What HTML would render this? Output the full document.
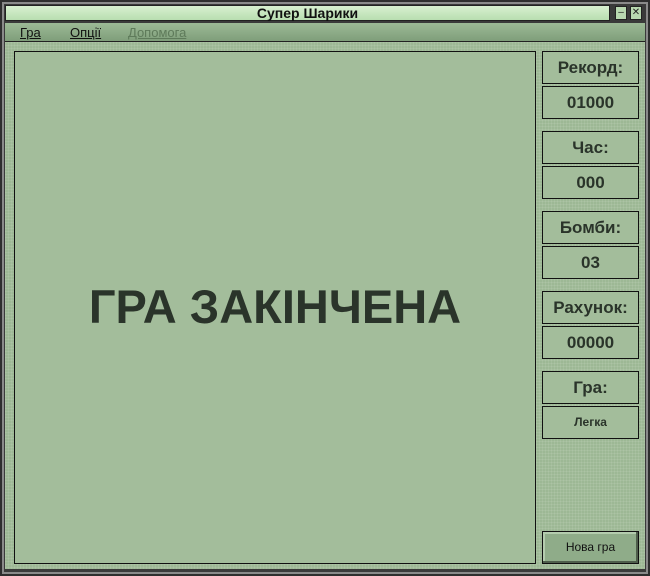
<!DOCTYPE html>
<html><head><meta charset="utf-8"><style>
*{margin:0;padding:0;box-sizing:border-box}
body{width:650px;height:576px;background:#2e2e2e;font-family:"Liberation Sans",sans-serif;position:relative;overflow:hidden}
.frame{position:absolute;left:2px;top:2px;width:646px;height:572px;border:2px solid #8a8a8a;background:#3a3a3a}
.title{position:absolute;left:5px;top:5px;width:605px;height:16px;background:linear-gradient(#d8f0d0,#b8deb0);border:1px solid #222;text-align:center;font-weight:bold;font-size:14px;line-height:14px;color:#111}
.tb{position:absolute;top:6px;width:12px;height:14px;border:1px solid #222;background:#b8d8b0;font-size:10px;line-height:12px;text-align:center;color:#222}
.menu{position:absolute;left:5px;top:23px;width:640px;height:19px;background:linear-gradient(#9cba96,#7f9e7a);border-bottom:1px solid #222}
.menu span{position:absolute;top:2px;font-size:13px;color:#111;text-decoration:underline}
.body{position:absolute;left:5px;top:42px;width:640px;height:527px;background:#9db895;background-image:linear-gradient(90deg,rgba(255,255,255,.08) 1px,transparent 1px),linear-gradient(rgba(255,255,255,.08) 1px,transparent 1px);background-size:3px 3px}
.game{position:absolute;left:14px;top:51px;width:522px;height:513px;border:1px solid #111;background:#a3bd9b;text-align:center;font-weight:bold;font-size:47px;color:#2a342a;line-height:510px}
.box{position:absolute;left:542px;width:97px;height:33px;border:1px solid #111;background:#a3bd9b;text-align:center;font-weight:bold;font-size:17px;line-height:31px;color:#2a342a}
.btn{position:absolute;left:542px;top:531px;width:97px;height:33px;border:1px solid #111;box-shadow:inset -2px -2px 0 #4e5e4b,inset 2px 2px 0 #b4ccae;background:#8fac89;text-align:center;font-size:12px;line-height:31px;color:#111}
</style></head><body>
<div class="frame"></div>
<div class="title">Супер Шарики</div>
<div class="tb" style="left:615px">&#8211;</div>
<div class="tb" style="left:630px">✕</div>
<div class="menu"><span style="left:15px">Гра</span><span style="left:65px">Опції</span><span style="left:123px;color:#5e7a5a">Допомога</span></div>
<div class="body"></div>
<div class="game">ГРА ЗАКІНЧЕНА</div>
<div class="box" style="top:51px">Рекорд:</div>
<div class="box" style="top:86px">01000</div>
<div class="box" style="top:131px">Час:</div>
<div class="box" style="top:166px">000</div>
<div class="box" style="top:211px">Бомби:</div>
<div class="box" style="top:246px">03</div>
<div class="box" style="top:291px">Рахунок:</div>
<div class="box" style="top:326px">00000</div>
<div class="box" style="top:371px">Гра:</div>
<div class="box" style="top:406px;font-size:12px">Легка</div>
<div class="btn">Нова гра</div>
</body></html>
